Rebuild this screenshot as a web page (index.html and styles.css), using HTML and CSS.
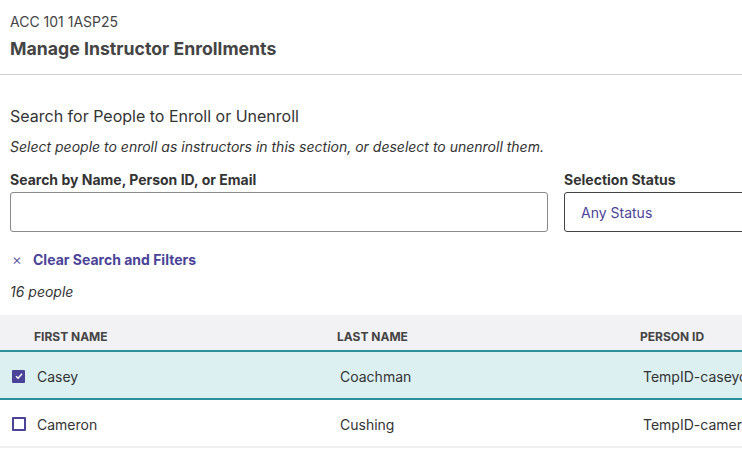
FILE: index.html
```html
<!DOCTYPE html>
<html>
<head>
<meta charset="utf-8">
<link rel="stylesheet" href="styles.css">
</head>
<body>
<header class="page-head">
  <div class="course">ACC 101 1ASP25</div>
  <h1 class="title">Manage Instructor Enrollments</h1>
</header>
<main class="content">
  <h2 class="section-title">Search for People to Enroll or Unenroll</h2>
  <p class="hint">Select people to enroll as instructors in this section, or deselect to unenroll them.</p>
  <div class="filters">
    <div class="field field-search">
      <label class="label">Search by Name, Person ID, or Email</label>
      <div class="input"></div>
    </div>
    <div class="field field-status">
      <label class="label">Selection Status</label>
      <div class="select">Any Status</div>
    </div>
  </div>
  <div class="clear"><span class="x">×</span><span>Clear Search and Filters</span></div>
  <div class="count">16 people</div>
</main>
<div class="table">
  <div class="row head">
    <div class="cell">FIRST NAME</div>
    <div class="cell">LAST NAME</div>
    <div class="cell">PERSON ID</div>
  </div>
  <div class="row body selected">
    <div class="cell first"><span class="cb checked"><svg width="10" height="10" viewBox="0 0 10 10"><path d="M2 5.2 L4.1 7.2 L8 2.8" fill="none" stroke="#fff" stroke-width="1.4"/></svg></span>Casey</div>
    <div class="cell">Coachman</div>
    <div class="cell">TempID-caseycoachman</div>
  </div>
  <div class="row body">
    <div class="cell first"><span class="cb"></span>Cameron</div>
    <div class="cell">Cushing</div>
    <div class="cell">TempID-cameroncushing</div>
  </div>
  <div class="row body"></div>
</div>
</body>
</html>
```
FILE: styles.css
```css
html, body { margin: 0; padding: 0; }
body {
  width: 742px;
  height: 452px;
  overflow: hidden;
  font-family: Inter, "Noto Sans", sans-serif;
  color: #333;
  background: #fff;
}
.page-head {
  padding: 13px 10px 0;
  height: 61px;
  border-bottom: 1px solid #cfcfcf;
}
.course { font-size: 14px; line-height: 18px; color: #444; }
.title { margin: 7px 0 0; font-size: 17.7px; line-height: 22px; font-weight: 700; color: #444; }
.content { padding: 31px 10px 0; }
.section-title { margin: 0; font-size: 16px; font-weight: 400; line-height: 20px; color: #333; }
.hint { margin: 12px 0 0; font-size: 14px; font-style: italic; line-height: 18px; color: #333; }
.filters { display: flex; gap: 16px; margin-top: 15px; width: 900px; }
.field { display: flex; flex-direction: column; gap: 3px; }
.field-search { width: 538px; }
.field-status { width: 220px; }
.label { font-size: 14px; font-weight: 700; line-height: 18px; color: #333; }
.input {
  height: 38px;
  border: 1px solid #8a8a8a;
  border-radius: 3px;
}
.select {
  height: 38px;
  border: 1px solid #444;
  border-radius: 3px;
  padding-left: 16px;
  display: flex;
  align-items: center;
  font-size: 14px;
  color: #4b4398;
}
.clear {
  display: flex;
  align-items: center;
  margin-top: 19px;
  font-size: 14px;
  font-weight: 700;
  color: #4b4398;
  line-height: 18px;
}
.clear .x { font-weight: 300; font-size: 15px; width: 16px; margin-left: 2px; margin-right: 5px; }
.count { margin-top: 14px; font-size: 14px; font-style: italic; line-height: 18px; color: #333; }
.table { margin-top: 14px; width: 909px; }
.row { display: grid; grid-template-columns: 303px 303px 303px; }
.row.head {
  background: #f2f2f4;
  height: 35px;
  align-items: center;
  border-bottom: 2px solid #2a9099;
}
.row.head .cell {
  padding-left: 34px;
  font-size: 12px;
  font-weight: 700;
  color: #444;
  padding-top: 7px;
}
.row.body {
  height: 46px;
  align-items: center;
  border-bottom: 2px solid #f0f0f0;
  font-size: 14px;
  color: #333;
}
.row.body .cell { padding-left: 37px; padding-top: 2px; white-space: nowrap; overflow: hidden; }
.row.body .cell.first { padding-left: 12px; display: flex; align-items: center; }
.row.selected { background: #dcf0f2; border-bottom: 2px solid #2a9099; }
.cb {
  width: 10px; height: 10px;
  border: 2px solid #4b4398;
  border-radius: 1px;
  margin-right: 11px;
  display: inline-flex;
  align-items: center;
  justify-content: center;
}
.cb.checked { background: #4b4398; width: 13px; height: 13px; border: 0; margin-right: 12px; }
```
